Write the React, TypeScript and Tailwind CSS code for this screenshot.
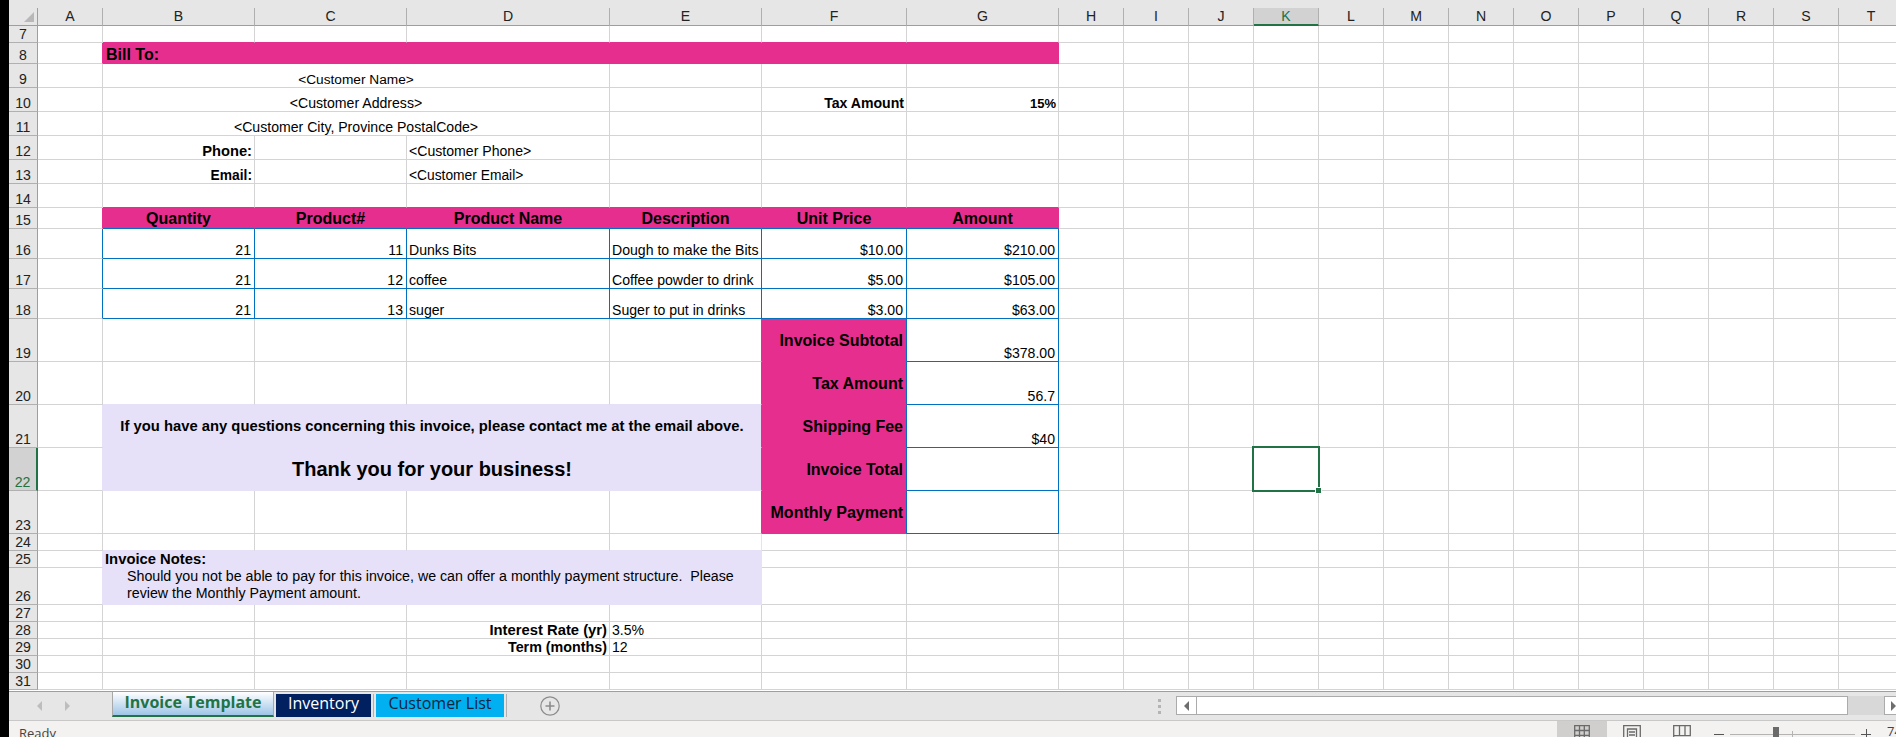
import React from "react";

// border colour classes for cells, default is the sheet gridline
const R_GRID = "border-r-[#d4d4d4]";
const B_GRID = "border-b-[#d4d4d4]";
const R_PINK = "border-r-[#e52e8e]";
const B_PINK = "border-b-[#e52e8e]";
const R_BLUE = "border-r-[#0070c0]";
const B_BLUE = "border-b-[#0070c0]";
const R_LAV = "border-r-[#e6e0f8]";
const B_LAV = "border-b-[#e6e0f8]";

const COLS = "ABCDEFGHIJKLMNOPQRST".split("");
const BLANK_COLS = "HIJKLMNOPQRST".split("");

type CellProps = {
  r?: string;
  b?: string;
  align?: string;
  leading?: string;
  pad?: string;
  className?: string;
  children?: React.ReactNode;
};

const Cell = ({
  r = R_GRID,
  b = B_GRID,
  align = "items-end",
  leading = "leading-[15px]",
  className = "",
  children,
}: CellProps) => (
  <div
    className={`flex min-w-0 overflow-hidden whitespace-nowrap border-r border-b px-[2px] ${align} ${leading} ${r} ${b} ${className}`}
  >
    {children}
  </div>
);

// right aligned value, used for numbers and amounts
const Num = ({ r, b, pad = "pr-[3px]", className = "", children }: CellProps) => (
  <Cell r={r} b={b} className={`justify-end ${pad} ${className}`}>
    {children}
  </Cell>
);

// pink label in the totals block, column F
const Total = ({ children }: { children: React.ReactNode }) => (
  <Cell
    r={R_BLUE}
    b={B_PINK}
    align="items-center"
    leading="leading-[18px]"
    className="justify-end bg-[#e52e8e] pt-[1px] pr-[3px] text-[16px] font-bold"
  >
    {children}
  </Cell>
);

// pink column heading in row 15
const Head = ({ children }: { children: React.ReactNode }) => (
  <Cell
    r={R_PINK}
    b={B_BLUE}
    leading="leading-[18px]"
    className="justify-center bg-[#e52e8e] text-[16px] font-bold"
  >
    {children}
  </Cell>
);

type RowProps = {
  n: number;
  aRight?: string;
  active?: boolean;
  children?: React.ReactNode;
};

const Row = ({ n, aRight = R_GRID, active, children }: RowProps) => (
  <>
    <div
      className={
        active
          ? "flex items-end justify-center border-r-2 border-b border-r-[#217346] border-b-[#b0b0b0] bg-[#d2d2d2] leading-[16px] text-[#217346]"
          : "flex items-end justify-center border-r border-b border-r-[#9e9e9e] border-b-[#b0b0b0] bg-[#e6e6e6] leading-[16px] text-[#222]"
      }
    >
      {n}
    </div>
    <Cell r={aRight} />
    {children}
    {BLANK_COLS.map((c) =>
      active && c === "K" ? (
        <div key={c} className="relative border-r border-b border-r-[#d4d4d4] border-b-[#d4d4d4]">
          <div className="absolute -top-[2px] -left-[2px] z-10 h-[46px] w-[68px] border-2 border-[#217346]" />
          <div className="absolute -right-[3px] -bottom-[3px] z-20 h-[5px] w-[5px] bg-[#217346] outline outline-white" />
        </div>
      ) : (
        <Cell key={c} />
      ),
    )}
  </>
);

const Blank6 = ({ b }: { b?: string }) => (
  <>
    <Cell b={b} />
    <Cell b={b} />
    <Cell b={b} />
    <Cell b={b} />
    <Cell b={b} />
    <Cell b={b} />
  </>
);

const products = [
  { n: 16, qty: 21, id: 11, name: "Dunks Bits", desc: "Dough to make the Bits", price: "$10.00", amount: "$210.00" },
  { n: 17, qty: 21, id: 12, name: "coffee", desc: "Coffee powder to drink", price: "$5.00", amount: "$105.00" },
  { n: 18, qty: 21, id: 13, name: "suger", desc: "Suger to put in drinks", price: "$3.00", amount: "$63.00" },
];

const Sheet = () => (
  <div className="grid grid-cols-[29px_65px_152px_152px_203px_152px_145px_152px_repeat(13,65px)] grid-rows-[18px_17px_21px_24px_24px_24px_24px_24px_24px_21px_30px_30px_30px_43px_43px_43px_43px_43px_17px_17px_37px_17px_17px_17px_17px_17px] text-[14.1px] text-black">
    {/* column letters */}
    <div className="relative border-r border-b border-r-[#9e9e9e] border-b-[#9e9e9e] bg-[#e6e6e6]">
      <svg className="absolute right-[3px] bottom-[3px]" width="10" height="10" viewBox="0 0 10 10">
        <polygon points="10,0 10,10 0,10" fill="#b8b8b8" />
      </svg>
    </div>
    {COLS.map((c) =>
      c === "K" ? (
        <div
          key={c}
          className="flex items-center justify-center border-r border-b-2 border-r-[#b0b0b0] border-b-[#217346] bg-[#d2d2d2] pt-[1px] text-[#217346]"
        >
          {c}
        </div>
      ) : (
        <div
          key={c}
          className="flex items-center justify-center border-r border-b border-r-[#b0b0b0] border-b-[#9e9e9e] bg-[#e6e6e6] pt-[1px] text-[#222]"
        >
          {c}
        </div>
      ),
    )}

    <Row n={7}>
      <Blank6 b={B_PINK} />
    </Row>
    <Row n={8} aRight={R_PINK}>
      <Cell r={R_PINK} b={B_PINK} leading="leading-[17px]" className="col-span-6 bg-[#e52e8e] pl-[3px] text-[16px] font-bold">
        Bill To:
      </Cell>
    </Row>
    <Row n={9}>
      <Cell className="col-span-3 justify-center text-[13.7px]">&lt;Customer Name&gt;</Cell>
      <Cell />
      <Cell />
      <Cell />
    </Row>
    <Row n={10}>
      <Cell className="col-span-3 justify-center">&lt;Customer Address&gt;</Cell>
      <Cell />
      <Num pad="pr-[2px]" className="font-bold">Tax Amount</Num>
      <Num pad="pr-[2px]" className="text-[13px] font-bold">15%</Num>
    </Row>
    <Row n={11}>
      <Cell className="col-span-3 justify-center">&lt;Customer City, Province PostalCode&gt;</Cell>
      <Cell />
      <Cell />
      <Cell />
    </Row>
    <Row n={12}>
      <Num pad="pr-[2px]" className="text-[14.7px] font-bold">Phone:</Num>
      <Cell />
      <Cell>&lt;Customer Phone&gt;</Cell>
      <Cell />
      <Cell />
      <Cell />
    </Row>
    <Row n={13}>
      <Num pad="pr-[2px]" className="text-[13.8px] font-bold">Email:</Num>
      <Cell />
      <Cell className="text-[13.8px]">&lt;Customer Email&gt;</Cell>
      <Cell />
      <Cell />
      <Cell />
    </Row>
    <Row n={14}>
      <Blank6 b={B_PINK} />
    </Row>
    <Row n={15} aRight={R_PINK}>
      <Head>Quantity</Head>
      <Head>Product#</Head>
      <Head>Product Name</Head>
      <Head>Description</Head>
      <Head>Unit Price</Head>
      <Head>Amount</Head>
    </Row>

    {products.map((p) => (
      <Row key={p.n} n={p.n} aRight={R_BLUE}>
        <Num r={R_BLUE} b={B_BLUE}>{p.qty}</Num>
        <Num r={R_BLUE} b={B_BLUE}>{p.id}</Num>
        <Cell r={R_BLUE} b={B_BLUE}>{p.name}</Cell>
        <Cell r={R_BLUE} b={B_BLUE}>{p.desc}</Cell>
        <Num r={R_BLUE} b={B_BLUE}>{p.price}</Num>
        <Num r={R_BLUE} b={B_BLUE}>{p.amount}</Num>
      </Row>
    ))}

    <Row n={19}>
      <Cell />
      <Cell />
      <Cell />
      <Cell r={R_PINK} />
      <Total>Invoice Subtotal</Total>
      <Num r={R_BLUE} b={B_BLUE}>$378.00</Num>
    </Row>
    <Row n={20}>
      <Cell b={B_LAV} />
      <Cell b={B_LAV} />
      <Cell b={B_LAV} />
      <Cell r={R_PINK} b={B_LAV} />
      <Total>Tax Amount</Total>
      <Num r={R_BLUE} b={B_BLUE}>56.7</Num>
    </Row>
    <Row n={21} aRight={R_LAV}>
      <Cell r={R_PINK} b={B_LAV} align="items-center" leading="leading-[18px]" className="col-span-4 justify-center bg-[#e6e0f8] text-[14.8px] font-bold">
        If you have any questions concerning this invoice, please contact me at the email above.
      </Cell>
      <Total>Shipping Fee</Total>
      <Num r={R_BLUE} b={B_BLUE}>$40</Num>
    </Row>
    <Row n={22} aRight={R_LAV} active>
      <Cell r={R_PINK} b={B_LAV} align="items-center" leading="leading-[24px]" className="col-span-4 justify-center bg-[#e6e0f8] text-[20px] font-bold">
        Thank you for your business!
      </Cell>
      <Total>Invoice Total</Total>
      <Cell r={R_BLUE} b={B_BLUE} />
    </Row>
    <Row n={23}>
      <Cell />
      <Cell />
      <Cell />
      <Cell r={R_PINK} />
      <Total>Monthly Payment</Total>
      <Cell r={R_BLUE} b={B_BLUE} />
    </Row>
    <Row n={24}>
      <Cell b={B_LAV} />
      <Cell b={B_LAV} />
      <Cell b={B_LAV} />
      <Cell r={R_LAV} b={B_LAV} />
      <Cell />
      <Cell />
    </Row>
    <Row n={25} aRight={R_LAV}>
      <Cell r={R_LAV} b={B_LAV} leading="leading-[16px]" className="col-span-4 bg-[#e6e0f8] text-[14.8px] font-bold">
        Invoice Notes:
      </Cell>
      <Cell />
      <Cell />
    </Row>
    <Row n={26} aRight={R_LAV}>
      <Cell r={R_LAV} b={B_LAV} align="items-start" leading="leading-[17px]" className="col-span-4 bg-[#e6e0f8] pl-[24px] text-[14.23px]">
        <div>
          Should you not be able to pay for this invoice, we can offer a monthly payment structure.&nbsp; Please
          <br />
          review the Monthly Payment amount.
        </div>
      </Cell>
      <Cell />
      <Cell />
    </Row>
    <Row n={27}>
      <Blank6 />
    </Row>
    <Row n={28}>
      <Cell />
      <Cell />
      <Num pad="pr-[2px]" className="text-[14.8px] font-bold">Interest Rate (yr)</Num>
      <Cell>3.5%</Cell>
      <Cell />
      <Cell />
    </Row>
    <Row n={29}>
      <Cell />
      <Cell />
      <Num pad="pr-[2px]" className="text-[14.3px] font-bold">Term (months)</Num>
      <Cell>12</Cell>
      <Cell />
      <Cell />
    </Row>
    <Row n={30}>
      <Blank6 />
    </Row>
    <Row n={31}>
      <Blank6 />
    </Row>
  </div>
);

const TabBar = () => (
  <div className="flex h-[29px] items-start border-t border-[#9e9e9e] bg-[#e6e6e6] font-['Open_Sans',sans-serif] text-[16px] leading-[18px]">
    {/* sheet nav arrows */}
    <div className="flex w-[103px] shrink-0 items-center gap-[23px] pt-[9px] pl-[28px]">
      <svg width="5" height="10" viewBox="0 0 5 10">
        <polygon points="5,0 5,10 0,5" fill="#bdbdbd" />
      </svg>
      <svg width="5" height="10" viewBox="0 0 5 10">
        <polygon points="0,0 0,10 5,5" fill="#bdbdbd" />
      </svg>
    </div>
    <div className="flex h-[25px] w-[162px] shrink-0 justify-center border-x border-b-2 border-x-[#a8a8a8] border-b-[#217346] bg-linear-to-b from-white to-[#9dc5e6] pt-[1px] font-bold text-[#217346]">
      Invoice Template
    </div>
    <div className="mt-[2px] ml-[2px] flex h-[23px] w-[95px] shrink-0 justify-center bg-[#002060] text-white">
      Inventory
    </div>
    <div className="mt-[2px] ml-[2px] h-[23px] w-px shrink-0 bg-[#b0b0b0]" />
    <div className="mt-[2px] ml-[2px] flex h-[23px] w-[128px] shrink-0 justify-center bg-[#00b0f0] text-[#10243e]">
      Customer List
    </div>
    <div className="mt-[2px] ml-[2px] h-[23px] w-px shrink-0 bg-[#b0b0b0]" />
    <svg className="mt-[4px] ml-[33px] shrink-0" width="20" height="20" viewBox="0 0 20 20" fill="none" stroke="#8c8c8c">
      <circle cx="10" cy="10" r="9.2" strokeWidth="1.2" />
      <path d="M10 5.5v9M5.5 10h9" strokeWidth="1.6" />
    </svg>
    <div className="flex-1" />
    {/* splitter dots */}
    <div className="mt-[7px] mr-[15px] flex shrink-0 flex-col gap-[3px]">
      <div className="h-[3px] w-[3px] bg-[#b4b4b4]" />
      <div className="h-[3px] w-[3px] bg-[#b4b4b4]" />
      <div className="h-[3px] w-[3px] bg-[#b4b4b4]" />
    </div>
    {/* horizontal scrollbar */}
    <div className="mt-[4px] flex h-[19px] w-[720px] shrink-0">
      <div className="flex w-[20px] items-center justify-center border border-r-0 border-[#ababab] bg-white">
        <svg width="5" height="10" viewBox="0 0 5 10">
          <polygon points="5,0 5,10 0,5" fill="#6e6e6e" />
        </svg>
      </div>
      <div className="w-[653px] border border-[#ababab] bg-white" />
      <div className="w-[36px] bg-[#d8d8d8]" />
      <div className="flex flex-1 items-center border border-r-0 border-[#ababab] bg-white pl-[6px]">
        <svg width="5" height="10" viewBox="0 0 5 10">
          <polygon points="0,0 0,10 5,5" fill="#6e6e6e" />
        </svg>
      </div>
    </div>
  </div>
);

const StatusBar = () => (
  <div className="flex h-[17px] items-start overflow-hidden border-t border-[#c8c8c8] bg-[#f3f2f1] font-['Open_Sans',sans-serif] text-[13px] leading-[18px] text-[#444]">
    <div className="pt-[3px] pl-[10px]">Ready</div>
    <div className="flex-1" />
    <div className="flex h-[17px] w-[50px] shrink-0 justify-center bg-[#d0cfce] pt-[4px]">
      <svg width="16" height="16" viewBox="0 0 16 16" fill="none" stroke="#6a6a6a" strokeWidth="1.3">
        <path d="M.7.7h14.6v14.6H.7zM.7 5.5h14.6M.7 10.3h14.6M5.5.7v14.6M10.3.7v14.6" />
      </svg>
    </div>
    <div className="ml-[16px] shrink-0 pt-[4px]">
      <svg width="18" height="16" viewBox="0 0 18 16" fill="none" stroke="#6a6a6a" strokeWidth="1.3">
        <path d="M.7.7h16.6v16H.7zM4.5 4v12h9V4zM6 7h6M6 10h6" />
      </svg>
    </div>
    <div className="ml-[32px] shrink-0 pt-[4px]">
      <svg width="18" height="16" viewBox="0 0 18 16" fill="none" stroke="#6a6a6a" strokeWidth="1.3">
        <path d="M.7 16V.7h16.6v10H.7M6.5.7v10M12 .7v10" />
      </svg>
    </div>
    {/* zoom slider */}
    <div className="ml-[23px] mt-[13px] h-px w-[10px] shrink-0 bg-[#555]" />
    <div className="relative ml-[6px] mt-[13px] h-px w-[125px] shrink-0 bg-[#b5b3b1]">
      <div className="absolute -top-[7px] left-[43px] h-[12px] w-[6px] bg-[#6a6a6a]" />
      <div className="absolute -top-[3px] left-[62px] h-[8px] w-px bg-[#b5b3b1]" />
    </div>
    <div className="relative ml-[6px] mt-[13px] h-px w-[10px] shrink-0 bg-[#555]">
      <div className="absolute -top-[5px] left-[5px] h-[10px] w-px bg-[#555]" />
    </div>
    <div className="ml-[16px] w-[9px] shrink-0 overflow-hidden pt-[1px]">74%</div>
  </div>
);

export default function App() {
  return (
    <div className="flex h-[737px] w-[1896px] overflow-hidden bg-black font-['Liberation_Sans',Arial,sans-serif]">
      <div className="w-[9px] shrink-0" />
      <div className="flex min-w-0 flex-1 flex-col bg-white">
        <div className="h-[8px] shrink-0 bg-[#e6e6e6]" />
        <div className="h-[682px] shrink-0 overflow-hidden">
          <Sheet />
        </div>
        <div className="h-px shrink-0 bg-white" />
        <TabBar />
        <StatusBar />
      </div>
    </div>
  );
}
